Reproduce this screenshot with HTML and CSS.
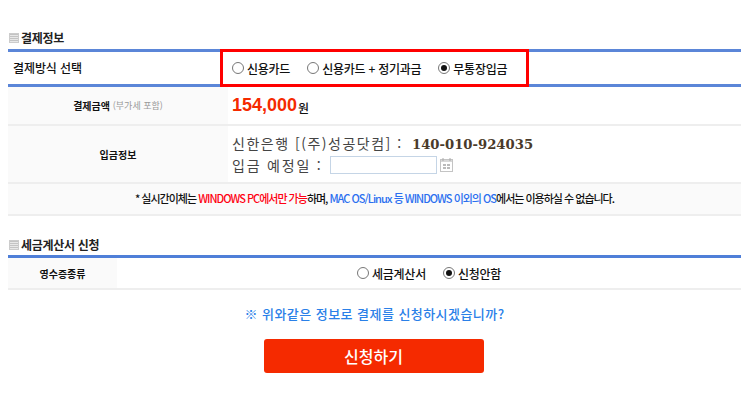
FILE: index.html
```html
<!DOCTYPE html>
<html lang="ko">

<head>
    <meta charset="UTF-8">
    <title>결제정보</title>
    <link rel="stylesheet" href="styles.css">
</head>

<body>
    <h3 class="section-title pay-title"><span class="title-icon"></span>결제정보</h3>
    <div class="method-row">
        <div class="method-label">결제방식 선택</div>
        <div class="method-box">
            <label class="radio"><span class="dot"></span>신용카드</label>
            <label class="radio"><span class="dot"></span>신용카드 + 정기과금</label>
            <label class="radio"><span class="dot checked"></span>무통장입금</label>
        </div>
    </div>

    <div class="row amount-row">
        <div class="cell-head wide"><b>결제금액</b>&nbsp;<span class="vat">(부가세 포함)</span></div>
        <div class="cell-body"><span class="price">154,000</span><b class="won">원</b></div>
    </div>

    <div class="row bank-row">
        <div class="cell-head wide"><b>입금정보</b></div>
        <div class="cell-body bank">
            <div class="bank-line">신한은행 [(주)성공닷컴] : <b>140-010-924035</b></div>
            <div class="date-line">
                <span class="date-label">입금 예정일 :</span>
                <input class="date-input" type="text">
                <svg class="cal" width="13" height="14" viewBox="0 0 13 14">
                    <rect x="0.5" y="1.5" width="12" height="12" fill="#fff" stroke="#c4c4c4" />
                    <rect x="1" y="2" width="11" height="2" fill="#d8d8d8" />
                    <path d="M3 0v3M10 0v3" stroke="#aaa" />
                    <path d="M3 7h3M7 7h3M3 10h3M7 10h3" stroke="#bbb" stroke-width="2" />
                </svg>
            </div>
        </div>
    </div>

    <div class="notice">* 실시간이체는 <span class="red">WINDOWS PC에서만 가능</span>하며, <span class="blue">MAC OS/Linux 등 WINDOWS 이외의 OS</span>에서는 이용하실 수 없습니다.</div>

    <h3 class="section-title tax-title"><span class="title-icon"></span>세금계산서 신청</h3>
    <div class="row tax-row">
        <div class="cell-head narrow"><b>영수증종류</b></div>
        <div class="tax-options">
            <label class="radio"><span class="dot"></span>세금계산서</label>
            <label class="radio"><span class="dot checked"></span>신청안함</label>
        </div>
    </div>

    <p class="question">※ 위와같은 정보로 결제를 신청하시겠습니까?</p>
    <div class="submit-wrap"><button class="submit">신청하기</button></div>
</body>

</html>
```

FILE: styles.css
```css
* {
    box-sizing: border-box;
}

body {
    margin: 0;
    padding: 0 9px 0 8px;
    width: 750px;
    height: 406px;
    overflow: hidden;
    background: #fff;
    color: #111;
    font-family: "Noto Sans CJK KR", "Noto Sans", sans-serif;
    font-size: 12px;
}

.section-title {
    display: flex;
    align-items: center;
    margin: 0;
    height: 20px;
    font-size: 12px;
    font-weight: 700;
    color: #222;
    letter-spacing: -0.3px;
}

.pay-title {
    margin-top: 27px;
    margin-bottom: 2px;
}

.tax-title {
    margin-top: 18px;
    margin-bottom: 1px;
}

.title-icon {
    width: 10px;
    height: 10px;
    margin: 1px 2px 0 1px;
    background: repeating-linear-gradient(#c4c4c4 0, #c4c4c4 1px, #e8e8e8 1px, #e8e8e8 2px);
    border: 1px solid #ccc;
}

.method-row {
    display: flex;
    height: 38px;
    border-top: 3px solid #5b86d8;
    border-bottom: 3px solid #5b86d8;
}

.method-label {
    width: 212px;
    padding-left: 5px;
    line-height: 31px;
    font-weight: 500;
    letter-spacing: -0.1px;
}

.method-box {
    display: flex;
    align-items: center;
    gap: 17px;
    width: 309px;
    height: 38px;
    margin-top: -3px;
    padding-left: 9px;
    border: 3px solid #f00;
}

.radio {
    display: flex;
    align-items: center;
    gap: 3px;
    font-weight: 500;
    letter-spacing: -0.25px;
}

.dot {
    display: inline-block;
    position: relative;
    width: 12px;
    height: 12px;
    border: 1px solid #777;
    border-radius: 50%;
    background: #fff;
}

.dot.checked::after {
    content: "";
    position: absolute;
    left: 2px;
    top: 2px;
    width: 6px;
    height: 6px;
    border-radius: 50%;
    background: #111;
}

.row {
    display: flex;
    border-bottom: 2px solid #eee;
}

.cell-head {
    display: flex;
    align-items: center;
    justify-content: center;
    background: #fafafa;
    font-size: 10px;
}

.cell-head b {
    font-weight: 700;
}

.wide {
    width: 220px;
}

.narrow {
    width: 109px;
}

.vat {
    color: #999;
    font-size: 9px;
}

.cell-body {
    padding-left: 4px;
}

.amount-row {
    height: 39px;
}

.amount-row .cell-body {
    display: flex;
    align-items: center;
}

.price {
    color: #f52a00;
    font-family: "Liberation Sans", sans-serif;
    font-size: 18px;
    font-weight: 700;
}

.won {
    margin: 3px 0 0 1px;
    font-size: 12px;
    font-weight: 500;
}

.bank-row {
    height: 58px;
}

.bank {
    padding-top: 7px;
    color: #444;
    font-size: 14px;
}

.bank-line {
    height: 20px;
    line-height: 20px;
    letter-spacing: 1.5px;
}

.bank-line b {
    margin-left: 4px;
    font-family: "DejaVu Serif", serif;
    font-size: 13.2px;
    letter-spacing: 0;
    color: #4a3a2a;
}

.date-line {
    display: flex;
    align-items: center;
    height: 24px;
    letter-spacing: 1.8px;
}

.date-input {
    width: 107px;
    height: 18px;
    margin: 0 3px 0 7px;
    border: 1px solid #c5d5e6;
    background: #fff;
}

.notice {
    height: 32px;
    line-height: 29px;
    text-align: center;
    background: #fafafa;
    border-bottom: 2px solid #eee;
    font-size: 11px;
    font-weight: 500;
    letter-spacing: -1px;
}

.red {
    color: #f01;
}

.blue {
    color: #2a6ff0;
}

.tax-row {
    height: 35px;
    border-top: 3px solid #4f7fd8;
}

.tax-options {
    display: flex;
    align-items: center;
    gap: 17px;
    padding-left: 240px;
}

.question {
    margin: 15px 0 0;
    height: 18px;
    line-height: 18px;
    text-align: center;
    color: #2a80e8;
    font-size: 13px;
    font-weight: 500;
    letter-spacing: 0.45px;
}

.submit-wrap {
    display: flex;
    justify-content: center;
    margin-top: 16px;
    padding-right: 2px;
}

.submit {
    width: 220px;
    height: 34px;
    border: none;
    border-radius: 3px;
    background: #f52a00;
    color: #fff;
    font-family: "Noto Sans CJK KR", sans-serif;
    font-size: 16px;
    font-weight: 500;
}
```
